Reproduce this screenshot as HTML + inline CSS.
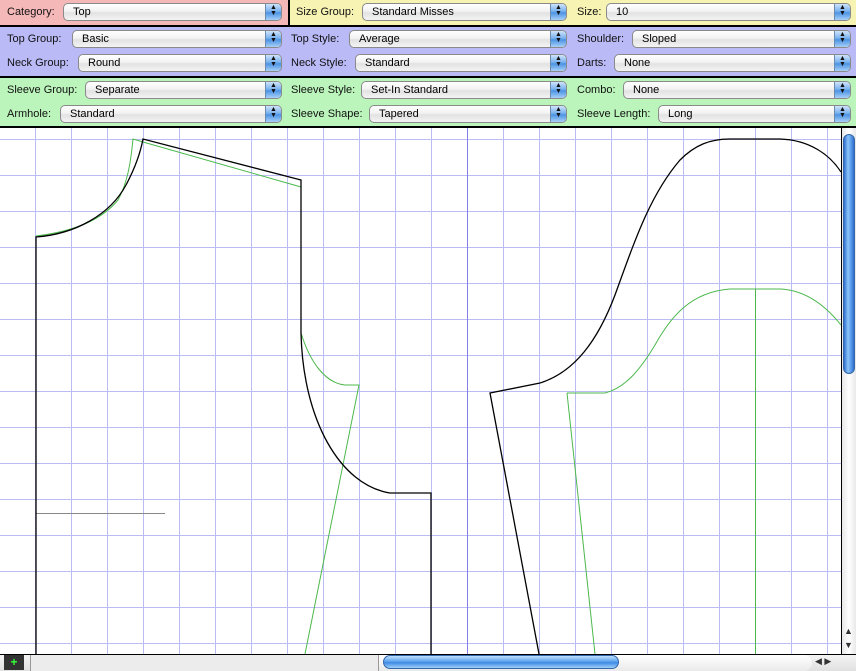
<!DOCTYPE html>
<html><head><meta charset="utf-8"><style>
*{margin:0;padding:0;box-sizing:border-box}
body{width:856px;height:671px;overflow:hidden;background:#fff;font-family:"Liberation Sans",sans-serif;font-size:11px;position:relative}
.p{position:absolute}
.lbl{position:absolute;color:#111;line-height:14px}
.pop{position:absolute;height:18px;border:1px solid #8a8a8a;border-radius:5px;background:linear-gradient(#fff,#f2f2f2 45%,#e2e2e2 55%,#f4f4f4);line-height:16px;padding-left:9px;color:#000;overflow:hidden}
.pop:after{content:"";position:absolute;right:0;top:0;width:15px;height:16px;background:linear-gradient(#cfe4fb,#79b1ee 45%,#4c93e3 55%,#a8d0f8);border-left:1px solid #6a8ab0}
.pop i{position:absolute;right:4px;top:1px;z-index:2;font-style:normal;font-size:7px;line-height:6px;color:#111;text-align:center;width:7px}
</style></head><body>
<div class="p" style="left:0;top:0;width:289px;height:25px;background:#f5b8b8"></div>
<div class="p" style="left:289px;top:0;width:567px;height:25px;background:#f7f3b3"></div>
<div class="p" style="left:288px;top:0;width:2px;height:25px;background:#000"></div>
<div class="p" style="left:0;top:25px;width:856px;height:2px;background:#000"></div>
<div class="p" style="left:0;top:27px;width:856px;height:49px;background:#babaf7"></div>
<div class="p" style="left:0;top:76px;width:856px;height:2px;background:#000"></div>
<div class="p" style="left:0;top:78px;width:856px;height:49px;background:#bbf5bb"></div>
<div class="p" style="left:0;top:126px;width:856px;height:2px;background:#000"></div>

<div class="lbl" style="left:7px;top:5px">Category:</div>
<div class="pop" style="left:63px;top:3px;width:219px">Top<i>▲<br>▼</i></div>
<div class="lbl" style="left:296px;top:5px">Size Group:</div>
<div class="pop" style="left:362px;top:3px;width:205px">Standard Misses<i>▲<br>▼</i></div>
<div class="lbl" style="left:577px;top:5px">Size:</div>
<div class="pop" style="left:606px;top:3px;width:245px">10<i>▲<br>▼</i></div>

<div class="lbl" style="left:7px;top:32px">Top Group:</div>
<div class="pop" style="left:72px;top:30px;width:210px">Basic<i>▲<br>▼</i></div>
<div class="lbl" style="left:291px;top:32px">Top Style:</div>
<div class="pop" style="left:349px;top:30px;width:218px">Average<i>▲<br>▼</i></div>
<div class="lbl" style="left:577px;top:32px">Shoulder:</div>
<div class="pop" style="left:632px;top:30px;width:219px">Sloped<i>▲<br>▼</i></div>

<div class="lbl" style="left:7px;top:56px">Neck Group:</div>
<div class="pop" style="left:78px;top:54px;width:204px">Round<i>▲<br>▼</i></div>
<div class="lbl" style="left:291px;top:56px">Neck Style:</div>
<div class="pop" style="left:355px;top:54px;width:212px">Standard<i>▲<br>▼</i></div>
<div class="lbl" style="left:577px;top:56px">Darts:</div>
<div class="pop" style="left:614px;top:54px;width:237px">None<i>▲<br>▼</i></div>

<div class="lbl" style="left:7px;top:83px">Sleeve Group:</div>
<div class="pop" style="left:85px;top:81px;width:197px">Separate<i>▲<br>▼</i></div>
<div class="lbl" style="left:291px;top:83px">Sleeve Style:</div>
<div class="pop" style="left:361px;top:81px;width:206px">Set-In Standard<i>▲<br>▼</i></div>
<div class="lbl" style="left:577px;top:83px">Combo:</div>
<div class="pop" style="left:623px;top:81px;width:228px">None<i>▲<br>▼</i></div>

<div class="lbl" style="left:7px;top:107px">Armhole:</div>
<div class="pop" style="left:60px;top:105px;width:222px">Standard<i>▲<br>▼</i></div>
<div class="lbl" style="left:291px;top:107px">Sleeve Shape:</div>
<div class="pop" style="left:369px;top:105px;width:198px">Tapered<i>▲<br>▼</i></div>
<div class="lbl" style="left:577px;top:107px">Sleeve Length:</div>
<div class="pop" style="left:658px;top:105px;width:193px">Long<i>▲<br>▼</i></div>

<svg class="p" style="left:0;top:128px" width="841" height="526" viewBox="0 128 841 526">
<g stroke="#bcbcf5" stroke-width="1" shape-rendering="crispEdges">
<path d="M35.5 128V654M71.5 128V654M107.5 128V654M143.5 128V654M179.5 128V654M215.5 128V654M251.5 128V654M287.5 128V654M323.5 128V654M359.5 128V654M395.5 128V654M431.5 128V654M503.5 128V654M539.5 128V654M575.5 128V654M611.5 128V654M647.5 128V654M683.5 128V654M719.5 128V654M755.5 128V654M791.5 128V654M827.5 128V654"/>
<path d="M0 139.5H841M0 175.5H841M0 211.5H841M0 247.5H841M0 283.5H841M0 319.5H841M0 355.5H841M0 391.5H841M0 427.5H841M0 463.5H841M0 499.5H841M0 535.5H841M0 571.5H841M0 607.5H841M0 643.5H841"/>
</g>
<path d="M467.5 128V654" stroke="#8080e8" stroke-width="1"/>
<path d="M36 513.5H165" stroke="#888" stroke-width="1"/>
<g fill="none" stroke="#4cb84c" stroke-width="1">
<path d="M36 236 C70 232 100 222 118 200 C128 182 131 160 133 139 L143 142 L301 187"/>
<path d="M301 333 C310 362 325 383 345 385 L359 385 L305 654"/>
<path d="M567 393 L595 654 M567 393 L605 393 C625 388 640 370 655 345 C670 318 690 292 730 289 L780 289 C805 290 825 305 841 325"/>
<path d="M755.5 289V654"/>
</g>
<g fill="none" stroke="#000" stroke-width="1.3">
<path d="M36 654 L36 237 C75 234 110 215 126 185 C134 170 140 155 143 139 L301 180 L301 333 C303 420 340 485 390 493 L431 493 L431 654"/>
<path d="M539 654 L490 393 L540 383 C575 372 598 340 615 295 C635 240 650 195 680 160 C695 145 710 139 730 139 L780 139 C810 140 830 155 841 172"/>
</g>
</svg>

<!-- vertical scrollbar -->
<div class="p" style="left:841px;top:128px;width:15px;height:526px;background:linear-gradient(90deg,#e8e8e8,#fff 50%,#e8e8e8);border-left:1px solid #000"></div>
<div class="p" style="left:843px;top:134px;width:12px;height:240px;border-radius:6px;background:linear-gradient(90deg,#2f6fcf,#8ec3f7 40%,#6aa9ef 60%,#2f6fcf);border:1px solid #3366aa"></div>
<div class="p" style="left:844px;top:626px;font-size:9px;color:#333">▲</div>
<div class="p" style="left:844px;top:640px;font-size:9px;color:#333">▼</div>
<!-- bottom bar -->
<div class="p" style="left:0;top:654px;width:856px;height:17px;background:linear-gradient(#f4f4f4,#e0e0e0);border-top:1px solid #000"></div>
<div class="p" style="left:4px;top:655px;width:20px;height:15px;background:#333;color:#3f3;font-weight:bold;font-size:12px;text-align:center;line-height:15px">+</div>
<div class="p" style="left:30px;top:655px;width:348px;height:16px;background:#ececec;border-left:1px solid #999"></div>
<div class="p" style="left:378px;top:655px;width:434px;height:16px;background:linear-gradient(#fff,#eaeaea);border-radius:0 8px 8px 0;border-left:1px solid #999"></div>
<div class="p" style="left:383px;top:655px;width:236px;height:14px;border-radius:7px;background:linear-gradient(#bfe0fb,#5ea3ee 45%,#3d8ae5 55%,#9fcff8);border:1px solid #3366aa"></div>
<div class="p" style="left:815px;top:656px;font-size:9px;color:#333">◀ ▶</div>
</body></html>
